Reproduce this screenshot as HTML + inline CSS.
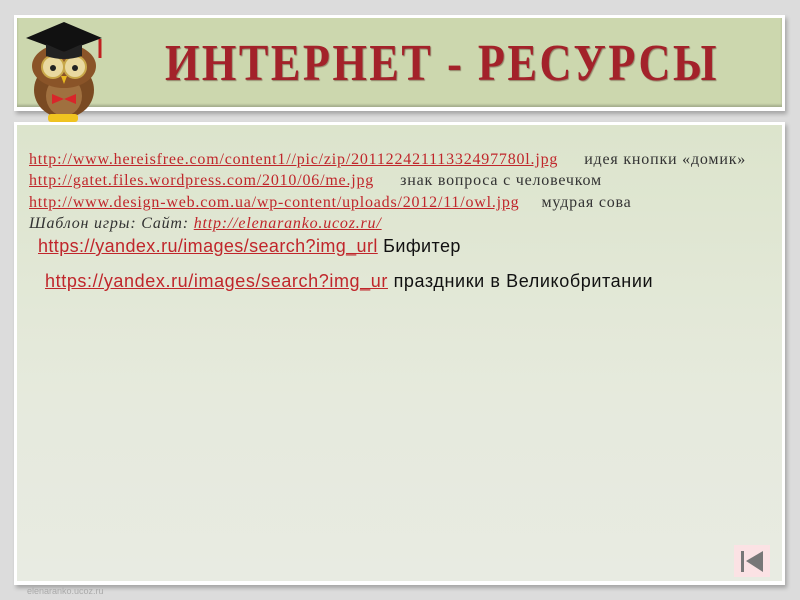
<!DOCTYPE html>
<html><head><meta charset="utf-8"><style>
html,body{margin:0;padding:0}
body{width:800px;height:600px;background:#dcdcdc;position:relative;overflow:hidden;font-family:"Liberation Sans",sans-serif}
.hdr{position:absolute;left:14px;top:15px;width:771px;height:96px;background:#fff;box-shadow:2px 3px 4px rgba(0,0,0,.25)}
.hdr .in{position:absolute;left:3px;top:3px;right:3px;bottom:4px;background:#ccd7ae;box-shadow:inset 0 -2px 2px rgba(0,0,0,.2)}
.title{position:absolute;left:165px;top:34px;font-family:"Liberation Serif",serif;font-weight:bold;font-size:52px;color:#a3222a;letter-spacing:3px;transform-origin:0 0;transform:scaleX(0.85);white-space:nowrap;text-shadow:1px 1px 1px rgba(60,0,0,.4)}
.cnt{position:absolute;left:14px;top:122px;width:771px;height:463px;background:#fff;box-shadow:2px 3px 4px rgba(0,0,0,.25)}
.cnt .in{position:absolute;left:3px;top:3px;right:3px;bottom:4px;background:linear-gradient(#dce4cc,#e6eadd 60%,#e8ebe2)}
.l{position:absolute;white-space:nowrap;font-family:"Liberation Serif",serif;font-size:16px;letter-spacing:0.8px;color:#333;line-height:18px}
.l a{color:#c0262b;text-decoration:underline}
.s{font-family:"Liberation Sans",sans-serif;font-size:18px;letter-spacing:0.4px;color:#111;line-height:20px}
.foot{position:absolute;left:27px;top:586px;font-size:9px;color:#aaa}
.btn{position:absolute;left:734px;top:545px;width:36px;height:32px;background:#fbe2e4}
</style></head><body>
<div class="hdr"><div class="in"></div></div>
<svg style="position:absolute;left:20px;top:18px" width="92" height="106" viewBox="0 0 92 106">
<ellipse cx="44" cy="72" rx="30" ry="28" fill="#7a4a22"/>
<ellipse cx="44" cy="78" rx="18" ry="20" fill="#a0703f"/>
<ellipse cx="44" cy="48" rx="32" ry="22" fill="#8a5428"/>
<circle cx="33" cy="49" r="11" fill="#e9d9a0" stroke="#c9a84a" stroke-width="2"/>
<circle cx="55" cy="49" r="11" fill="#e9d9a0" stroke="#c9a84a" stroke-width="2"/>
<circle cx="33" cy="50" r="3" fill="#222"/><circle cx="55" cy="50" r="3" fill="#222"/>
<path d="M41 58 L47 58 L44 66Z" fill="#e8b820"/>
<path d="M32 76 L44 81 L56 76 L56 86 L44 81 L32 86Z" fill="#d8262a"/>
<path d="M6 20 L44 4 L82 20 L44 34Z" fill="#111"/>
<path d="M26 26 L26 38 Q44 44 62 38 L62 26 L44 34Z" fill="#222"/>
<path d="M80 21 L80 40" stroke="#c02020" stroke-width="3"/>
<rect x="28" y="96" width="30" height="8" rx="3" fill="#f0c420"/>
</svg>
<div class="title">ИНТЕРНЕТ - РЕСУРСЫ</div>
<div class="cnt"><div class="in"></div></div>
<div class="l" style="left:29px;top:151px"><a>http://www.hereisfree.com/content1//pic/zip/20112242111332497780l.jpg</a><span style="margin-left:26px">идея кнопки «домик»</span></div>
<div class="l" style="left:29px;top:172px"><a>http://gatet.files.wordpress.com/2010/06/me.jpg</a><span style="margin-left:26px">знак вопроса с человечком</span></div>
<div class="l" style="left:29px;top:194px"><a>http://www.design-web.com.ua/wp-content/uploads/2012/11/owl.jpg</a><span style="margin-left:22px">мудрая сова</span></div>
<div class="l" style="left:29px;top:215px;font-style:italic">Шаблон игры: Сайт: <a>http://elenaranko.ucoz.ru/</a></div>
<div class="l s" style="left:38px;top:236px"><a>https://yandex.ru/images/search?img_url</a> Бифитер</div>
<div class="l s" style="left:45px;top:271px;letter-spacing:0.6px"><a>https://yandex.ru/images/search?img_ur</a> праздники в Великобритании</div>
<div class="btn"><svg width="36" height="32"><rect x="7" y="6" width="3" height="21" fill="#777"/><path d="M12 16 L29 6 L29 27Z" fill="#777"/></svg></div>
<div class="foot">elenaranko.ucoz.ru</div>
</body></html>
